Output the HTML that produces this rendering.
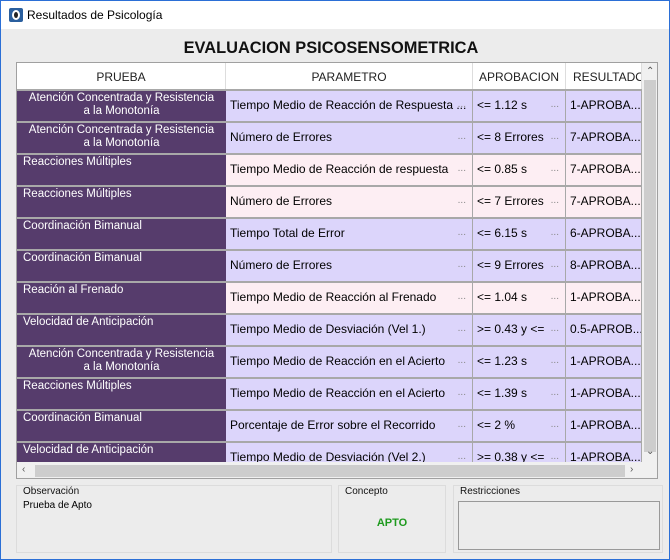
<!DOCTYPE html>
<html><head><meta charset="utf-8"><style>
*{margin:0;padding:0;box-sizing:border-box}
body{width:670px;height:560px;overflow:hidden;background:#f0f0f0;font-family:"Liberation Sans",sans-serif;font-size:12px;color:#000;position:relative}
.win{position:absolute;left:0;top:0;width:670px;height:560px;border:1px solid #2b6fd6;background:#ececec}
.tb{position:absolute;left:0;top:0;width:668px;height:28px;background:#fff}
.tb span{position:absolute;left:26px;top:7px;font-size:12px}
.ico{position:absolute;left:8px;top:7px;width:14px;height:14px;background:#2a5f9e;border-radius:2px}
.ico:after{content:"";position:absolute;left:3px;top:2px;width:8px;height:10px;border-radius:50%;background:#fff}
.ico:before{content:"";position:absolute;left:5px;top:4px;width:4px;height:6px;border-radius:50%;background:#222;z-index:2}
h1{position:absolute;left:0;width:660px;top:38px;text-align:center;font-size:16.4px;font-weight:bold;color:#111}
.grid{position:absolute;left:15px;top:61px;width:642px;height:417px;border:1px solid #a0a0a0;background:#fff;overflow:hidden}
.c{position:absolute;white-space:nowrap;overflow:hidden;font-size:12px;line-height:14px}
.hd{top:0;height:27px;background:#fff;text-align:center;padding-top:7px;color:#222;border-right:1px solid #ddd}
.p{background:#563c6c;color:#fff;text-align:left;padding:1px 0 0 6px;font-size:11.5px;line-height:13px}
.p.two{text-align:center;padding:1px 0 0 0}
.d{padding-top:7px;padding-left:4px;border-right:1px solid #a8a8a8}
.sep{position:absolute;left:0;width:625px;height:2px;background:#a8a8a8}
.dots{position:absolute;right:6px;top:7px;color:#888;font-size:10px}
.vs{position:absolute;left:625px;top:0;width:16px;height:400px;background:#f0f0f0}
.thumb{position:absolute;left:627px;top:17px;width:12px;height:372px;background:#cdcdcd}
.hs{position:absolute;left:0;top:399px;width:641px;height:17px;background:#f0f0f0}
.hthumb{position:absolute;left:18px;top:402px;width:590px;height:12px;background:#cdcdcd}
.ar{position:absolute;font-size:10px;color:#555}
.gb{position:absolute;border:1px solid #dcdcdc;top:484px;height:68px}
.gb .l{position:absolute;left:6px;top:0;font-size:10px;color:#111;background:#ececec}
</style></head><body><div class="win">
<div class="tb"><div class="ico"></div><span>Resultados de Psicología</span></div>
<h1>EVALUACION PSICOSENSOMETRICA</h1>
<div class="grid">
<div class="c hd" style="left:0;width:209px">PRUEBA</div>
<div class="c hd" style="left:209px;width:247px">PARAMETRO</div>
<div class="c hd" style="left:456px;width:93px">APROBACION</div>
<div class="c hd" style="left:549px;width:76px;text-align:left;padding-left:7px">RESULTADO</div>
<div id="rows"></div>
<div class="vs"></div><div class="thumb"></div>
<div class="ar" style="left:629px;top:3px">&#8963;</div>
<div class="ar" style="left:629px;top:383px">&#8964;</div>
<div class="hs"></div><div class="hthumb"></div>
<div class="ar" style="left:5px;top:401px">&lsaquo;</div>
<div class="ar" style="left:613px;top:401px">&rsaquo;</div>
</div>
<div class="gb" style="left:15px;width:316px"><span class="l">Observación</span><div style="position:absolute;left:6px;top:14px;font-size:10px">Prueba de Apto</div></div>
<div class="gb" style="left:337px;width:108px"><span class="l">Concepto</span><div style="position:absolute;left:0;width:106px;top:31px;text-align:center;font-size:11px;font-weight:bold;color:#1e9a1e">APTO</div></div>
<div class="gb" style="left:452px;width:210px"><span class="l">Restricciones</span><div style="position:absolute;left:4px;top:15px;width:202px;height:49px;border:1px solid #999;background:#ececec"></div></div>
</div>
<script>
var A="Atención Concentrada y Resistencia<br>a la Monotonía";
var R=[
[A,"Tiempo Medio de Reacción de Respuesta ...","<= 1.12 s","1-APROBA...",0,1],
[A,"Número de Errores","<= 8 Errores","7-APROBA...",0,1],
["Reacciones Múltiples","Tiempo Medio de Reacción de respuesta","<= 0.85 s","7-APROBA...",1,0],
["Reacciones Múltiples","Número de Errores","<= 7 Errores","7-APROBA...",1,0],
["Coordinación Bimanual","Tiempo Total de Error","<= 6.15 s","6-APROBA...",0,0],
["Coordinación Bimanual","Número de Errores","<= 9 Errores","8-APROBA...",0,0],
["Reación al Frenado","Tiempo Medio de Reacción al Frenado","<= 1.04 s","1-APROBA...",1,0],
["Velocidad de Anticipación","Tiempo Medio de Desviación (Vel 1.)",">= 0.43 y <=","0.5-APROB...",0,0],
[A,"Tiempo Medio de Reacción en el Acierto","<= 1.23 s","1-APROBA...",0,1],
["Reacciones Múltiples","Tiempo Medio de Reacción en el Acierto","<= 1.39 s","1-APROBA...",0,0],
["Coordinación Bimanual","Porcentaje de Error sobre el Recorrido","<= 2 %","1-APROBA...",0,0],
["Velocidad de Anticipación","Tiempo Medio de Desviación (Vel 2.)",">= 0.38 y <=","1-APROBA...",0,0]];
var h="";
R.forEach(function(r,i){var t=26+i*32;var bg=r[4]?"#fdeef3":"#dcd5fb";
h+='<div class="sep" style="top:'+t+'px"></div>';
var y=t+2;
h+='<div class="c p'+(r[5]?' two':'')+'" style="left:0;top:'+y+'px;width:209px;height:30px">'+r[0]+'</div>';
h+='<div class="c d" style="left:209px;top:'+y+'px;width:247px;height:30px;background:'+bg+'">'+r[1].replace(/</g,"&lt;")+'<span class="dots">...</span></div>';
h+='<div class="c d" style="left:456px;top:'+y+'px;width:93px;height:30px;background:'+bg+'">'+r[2].replace(/</g,"&lt;")+'<span class="dots">...</span></div>';
h+='<div class="c d" style="left:549px;top:'+y+'px;width:76px;height:30px;background:'+bg+'">'+r[3]+'</div>';});
document.getElementById("rows").outerHTML=h;
</script>
</body></html>
